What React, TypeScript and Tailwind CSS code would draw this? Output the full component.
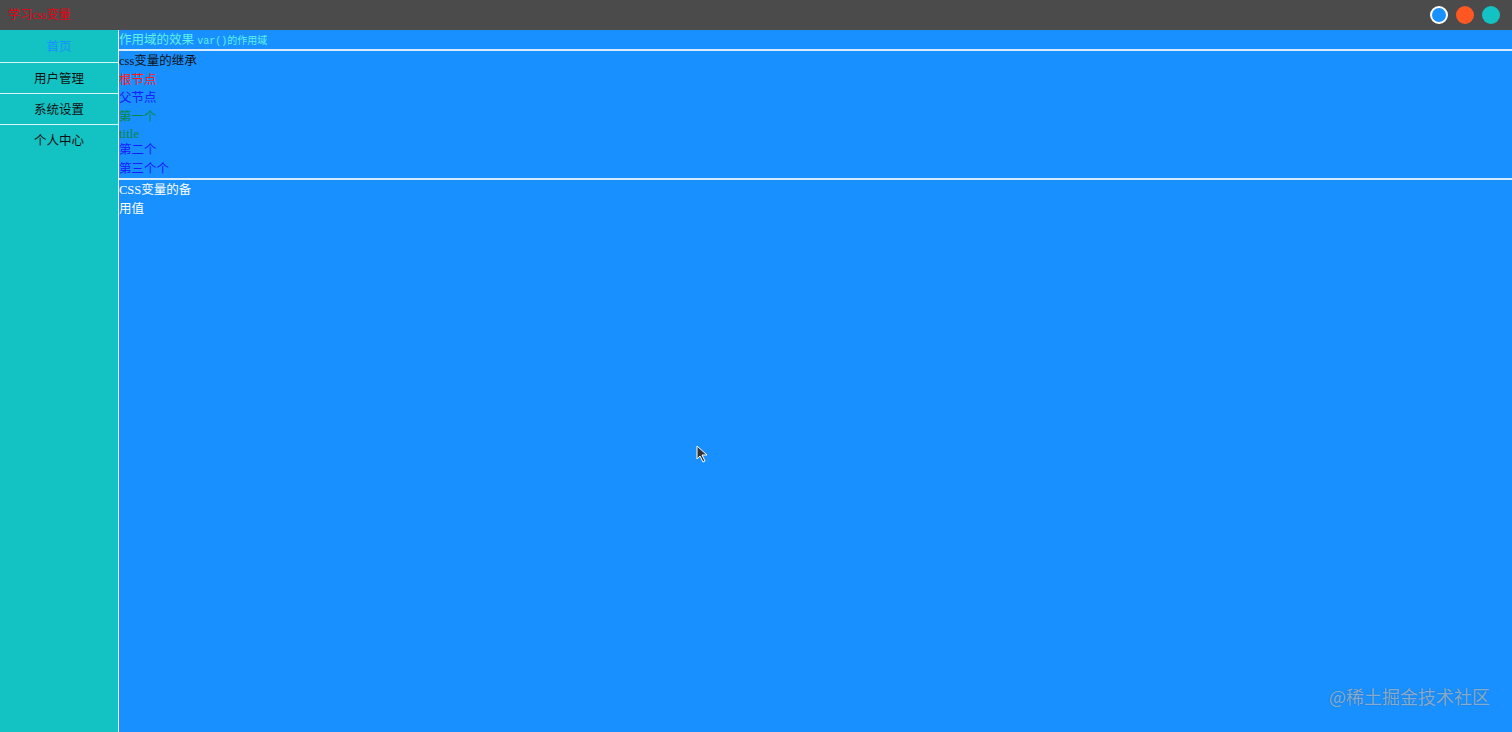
import React from "react";

const menu = [
  { name: "首页", active: true, h: "h-[33px]" },
  { name: "用户管理", h: "h-[31px]" },
  { name: "系统设置", h: "h-[31px]" },
  { name: "个人中心", h: "h-[31px]" },
];

const inherit = [
  { text: "根节点", cls: "text-[#ff1a1a]" },
  { text: "父节点", cls: "text-[#1a1aff]" },
  { text: "第一个", cls: "text-[#0a8a3a]" },
  { text: "title", cls: "text-[#0a8a3a] text-[13px] leading-[15px]" },
  { text: "第二个", cls: "text-[#1a1aff]" },
  { text: "第三个个", cls: "text-[#1a1aff]" },
];

export default function App() {
  return (
    <div className="relative flex h-screen w-full flex-col overflow-hidden font-['Liberation_Serif','Noto_Sans_CJK_SC',serif]">
      {/* Header */}
      <header className="flex h-[30px] shrink-0 items-center justify-between bg-[#4b4b4b] pl-[8px] pr-[12px]">
        <div className="text-[12px] text-[#e60012]">学习css变量</div>
        <div className="flex items-center gap-[8px]">
          <span className="h-[18px] w-[18px] rounded-full border-2 border-white bg-[#1890ff]" />
          <span className="h-[18px] w-[18px] rounded-full bg-[#ff5722]" />
          <span className="h-[18px] w-[18px] rounded-full bg-[#13c2c2]" />
        </div>
      </header>

      <div className="flex flex-1">
        {/* Sidebar */}
        <aside className="w-[118px] shrink-0 bg-[#13c2c2] font-['Noto_Sans_CJK_SC',sans-serif]">
          {menu.map((m, i) => (
            <div
              key={m.name}
              className={`flex ${m.h} items-center justify-center text-[12.5px] ${
                m.active ? "text-[#1890ff]" : "text-[#111]"
              } ${i < 3 ? "border-b border-[#d8f6f6]" : ""}`}
            >
              {m.name}
            </div>
          ))}
        </aside>

        {/* Main */}
        <main className="flex-1 border-l border-white bg-[#1890ff] text-[12.5px] leading-[18.5px]">
          <section className="h-[21px] border-b-2 border-[#d6ebff] pt-[1px]">
            <span className="text-[#5ff0e8]">作用域的效果</span>{" "}
            <span className="font-['Liberation_Mono','Noto_Sans_CJK_SC',monospace] text-[10px] text-[#5ff0e8]">
              var()的作用域
            </span>
          </section>
          <section className="border-b-2 border-[#d6ebff] pt-[1px]">
            <div className="text-[#111]">css变量的继承</div>
            {inherit.map((r) => (
              <div key={r.text} className={r.cls}>
                {r.text}
              </div>
            ))}
          </section>
          <section className="w-[78px] pt-[1px] leading-[19px] text-white">CSS变量的备用值</section>
        </main>
      </div>

      {/* cursor */}
      <svg className="absolute left-[696px] top-[445px]" width="12" height="18" viewBox="0 0 12 18">
        <path d="M1 1 L1 14 L4 11 L7 17 L9 16 L6 10 L11 10 Z" fill="#333" stroke="#fff" strokeWidth="1" />
      </svg>

      {/* watermark */}
      <div className="absolute bottom-[22px] right-[22px] font-['Noto_Sans_CJK_SC',sans-serif] text-[18px] text-white/50 [text-shadow:0_0_1px_rgba(0,0,0,0.45)]">
        @稀土掘金技术社区
      </div>
    </div>
  );
}
